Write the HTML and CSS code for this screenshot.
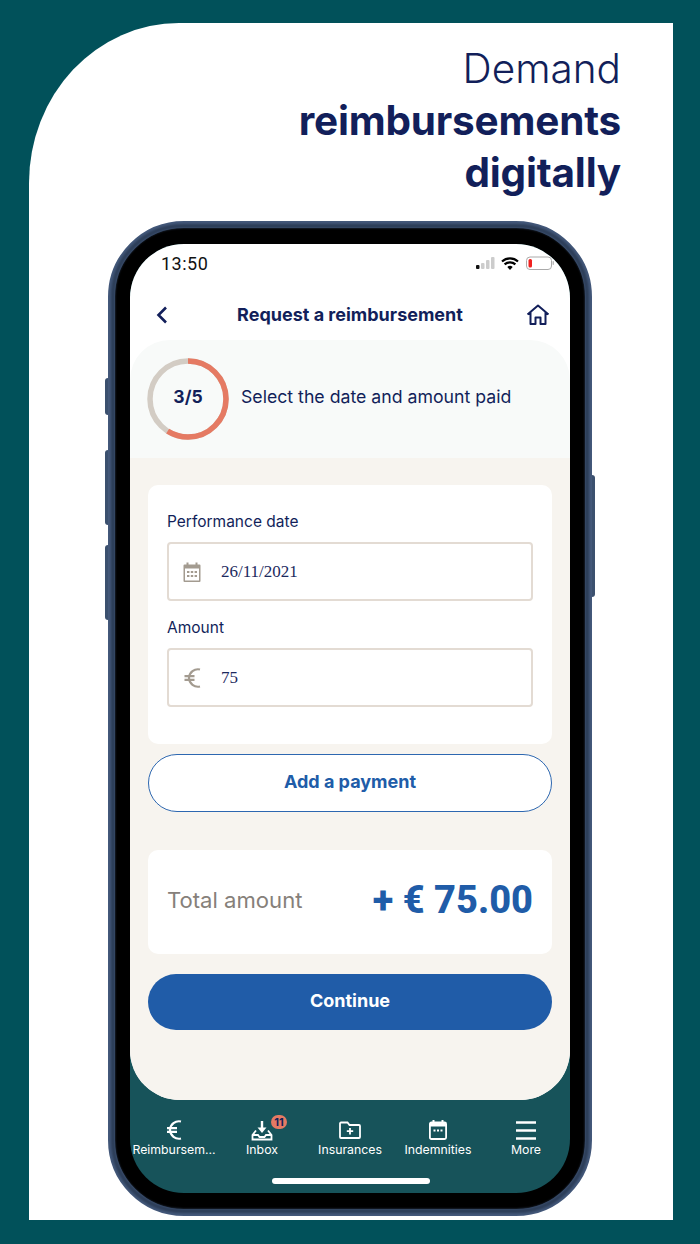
FILE: index.html
```html
<!DOCTYPE html>
<html lang="en">
<head>
    <meta charset="UTF-8">
    <title>Demand reimbursements digitally</title>
    <link rel="stylesheet" href="styles.css">
</head>
<body>
    <div class="panel">
        <h1 class="headline">Demand<br><b>reimbursements<br>digitally</b></h1>
        <div class="phone">
            <span class="side-btn side-1"></span>
            <span class="side-btn side-2"></span>
            <span class="side-btn side-3"></span>
            <span class="side-btn side-4"></span>
            <div class="screen">
                <div class="status-bar">
                    <span class="time">13:50</span>
                    <svg class="status-icons" width="78" height="16" viewBox="0 0 78 16">
                        <rect x="0" y="9" width="3.5" height="4" rx="1" fill="#111"/>
                        <rect x="5" y="7" width="3.5" height="6" rx="1" fill="#ccc"/>
                        <rect x="10" y="4" width="3.5" height="9" rx="1" fill="#ccc"/>
                        <rect x="15" y="1" width="3.5" height="12" rx="1" fill="#ccc"/>
                        <path d="M26 5.5a12 12 0 0 1 16 0M28.6 8.4a8 8 0 0 1 10.8 0" fill="none" stroke="#000" stroke-width="2.2"/>
                        <path d="M31.3 11a4 4 0 0 1 5.4 0L34 14z" fill="#000"/>
                        <rect x="50.5" y="1" width="25" height="12.5" rx="3.5" fill="#fff" stroke="#aaa"/>
                        <rect x="52.5" y="3" width="3.5" height="8.5" rx="1.5" fill="#f0211f"/>
                        <rect x="76.5" y="5" width="1.5" height="4" rx="0.7" fill="#bbb"/>
                    </svg>
                </div>
                <div class="nav-bar">
                    <svg class="nav-back" width="12" height="18" viewBox="0 0 12 18"><path d="M10 1.5 2.5 9l7.5 7.5" fill="none" stroke="#121f5a" stroke-width="2.6"/></svg>
                    <span class="nav-title">Request a reimbursement</span>
                    <svg class="nav-home" width="24" height="22" viewBox="0 0 24 22"><path d="M1.5 10.5 12 1.5l10.5 9M4.5 8.500V20h5v-6.500h5V20h5V8.500" fill="none" stroke="#121f5a" stroke-width="2" stroke-linejoin="round"/></svg>
                </div>
                <div class="content">
                    <div class="step">
                        <div class="ring">
                            <svg width="82" height="82" viewBox="0 0 82 82">
                                <circle cx="41" cy="41" r="38" fill="none" stroke="#d3ccc4" stroke-width="5.5"/>
                                <circle cx="41" cy="41" r="38" fill="none" stroke="#e57a63" stroke-width="5.5" pathLength="100" stroke-dasharray="59 100" transform="rotate(-90 41 41)"/>
                            </svg>
                            <span class="ring-label">3/5</span>
                        </div>
                        <span class="step-text">Select the date and amount paid</span>
                    </div>
                    <div class="form-area">
                        <div class="card fields">
                            <label class="field-label">Performance date</label>
                            <div class="field">
                                <svg class="field-icon" width="18" height="20" viewBox="0 0 18 20">
                                    <path d="M1.500 2.500h15a1 1 0 0 1 1 1V19a1 1 0 0 1-1 1h-15a1 1 0 0 1-1-1V3.500a1 1 0 0 1 1-1z" fill="#a39b90"/>
                                    <rect x="3.500" y="0.500" width="2" height="4" fill="#a39b90"/>
                                    <rect x="12.500" y="0.500" width="2" height="4" fill="#a39b90"/>
                                    <rect x="2" y="6.500" width="14" height="12" fill="#fff"/>
                                    <g fill="#a39b90">
                                        <rect x="4" y="9" width="2.400" height="2"/><rect x="7.800" y="9" width="2.400" height="2"/><rect x="11.600" y="9" width="2.400" height="2"/>
                                        <rect x="4" y="13" width="2.400" height="2"/><rect x="7.800" y="13" width="2.400" height="2"/><rect x="11.600" y="13" width="2.400" height="2"/>
                                    </g>
                                </svg>
                                <span class="field-value">26/11/2021</span>
                            </div>
                            <label class="field-label label-amount">Amount</label>
                            <div class="field">
                                <svg class="field-icon" width="18" height="20" viewBox="0 0 18 20">
                                    <path d="M17 1.500A9 9 0 0 0 6 10a9 9 0 0 0 11 8.500M1.500 8.200h10M1.500 11.800h10" fill="none" stroke="#a39b90" stroke-width="2.200"/>
                                </svg>
                                <span class="field-value">75</span>
                            </div>
                        </div>
                        <div class="add-payment">Add a payment</div>
                        <div class="card total">
                            <span class="total-label">Total amount</span>
                            <span class="total-value">+ € 75.00</span>
                        </div>
                        <div class="continue">Continue</div>
                    </div>
                </div>
                <div class="tabs">
                    <div class="tab">
                        <svg class="tab-icon" width="22" height="22" viewBox="0 0 22 22">
                            <path d="M18 2.500A9 9 0 0 0 7 11a9 9 0 0 0 11 8.500M4 9.200h10M4 12.800h10" fill="none" stroke="#fff" stroke-width="2.200"/>
                        </svg>
                        <span class="tab-label">Reimbursem...</span>
                    </div>
                    <div class="tab">
                        <svg class="tab-icon" width="22" height="22" viewBox="0 0 22 22">
                            <path d="M5 11.500 1.500 16v4.500h19V16L17 11.500" fill="none" stroke="#fff" stroke-width="1.800"/>
                            <path d="M1.500 16h5.500l1.500 2h5l1.500-2h5.500" fill="none" stroke="#fff" stroke-width="1.800"/>
                            <path d="M11 2v8" stroke="#fff" stroke-width="2.400"/>
                            <path d="M6.500 8.500h9L11 14z" fill="#fff"/>
                        </svg>
                        <span class="badge">11</span>
                        <span class="tab-label">Inbox</span>
                    </div>
                    <div class="tab">
                        <svg class="tab-icon" width="22" height="22" viewBox="0 0 22 22">
                            <path d="M2 3.500h6.500l2 2.500H20a1 1 0 0 1 1 1v11a1 1 0 0 1-1 1H2a1 1 0 0 1-1-1V4.500a1 1 0 0 1 1-1z" fill="none" stroke="#fff" stroke-width="1.800"/>
                            <path d="M11 9v6.500M7.800 12.200h6.400" stroke="#fff" stroke-width="1.800"/>
                        </svg>
                        <span class="tab-label">Insurances</span>
                    </div>
                    <div class="tab">
                        <svg class="tab-icon" width="22" height="22" viewBox="0 0 22 22">
                            <rect x="2.900" y="3.500" width="16.200" height="16.500" rx="1.500" fill="none" stroke="#fff" stroke-width="1.800"/>
                            <rect x="3" y="3.500" width="16" height="4" fill="#fff"/>
                            <rect x="5.500" y="1" width="2" height="4" fill="#fff"/>
                            <rect x="14.500" y="1" width="2" height="4" fill="#fff"/>
                            <rect x="6.500" y="10.500" width="2" height="2" fill="#fff"/>
                            <rect x="10" y="10.500" width="2" height="2" fill="#fff"/>
                            <rect x="13.500" y="10.500" width="2" height="2" fill="#fff"/>
                        </svg>
                        <span class="tab-label">Indemnities</span>
                    </div>
                    <div class="tab">
                        <svg class="tab-icon" width="22" height="22" viewBox="0 0 22 22">
                            <path d="M1 3.500h20M1 11.500h20M1 19.500h20" stroke="#fff" stroke-width="2.400"/>
                        </svg>
                        <span class="tab-label">More</span>
                    </div>
                </div>
                <div class="home-bar"></div>
            </div>
        </div>
    </div>
</body>
</html>
```

FILE: styles.css
```css
html, body {
    margin: 0;
    padding: 0;
}
body {
    width: 700px;
    height: 1244px;
    box-sizing: border-box;
    padding: 23px 27px 24px 29px;
    background-color: #01515a;
    font-family: "Inter", sans-serif;
    color: #121f5a;
    overflow: hidden;
}
.panel {
    height: 1197px;
    background-color: #fff;
    border-top-left-radius: 150px 160px;
    overflow: hidden;
}
.headline {
    margin: 0;
    padding: 20px 52px 0 0;
    height: 178px;
    box-sizing: border-box;
    text-align: right;
    font-size: 40.5px;
    line-height: 52px;
    font-weight: 300;
}
.headline b {
    font-weight: 700;
    letter-spacing: -0.2px;
}
.phone {
    position: relative;
    width: 484px;
    height: 995px;
    margin: 20px 0 0 79px;
    box-sizing: border-box;
    background-color: #000;
    border: 7px solid #43587a;
    padding: 16px 15px;
    border-radius: 76px;
}
/* darker inner edge of the metal frame */
.phone::before {
    content: "";
    position: absolute;
    inset: -4px;
    border: 4px solid #2c3d57;
    border-radius: 72px;
    filter: blur(1px);
}
.side-btn {
    position: absolute;
    width: 3px;
    background-color: #3b506e;
    border-radius: 3px 0 0 3px;
}
.side-1 { left: -10px; top: 150px; height: 37px; }
.side-2 { left: -10px; top: 222px; height: 75px; }
.side-3 { left: -10px; top: 317px; height: 75px; }
.side-4 { right: -10px; top: 247px; height: 122px; border-radius: 0 3px 3px 0; }
.screen {
    position: relative;
    width: 440px;
    height: 949px;
    background-color: #17535a;
    border-radius: 54px;
    overflow: hidden;
}
.status-bar {
    display: flex;
    justify-content: space-between;
    align-items: center;
    height: 40px;
    background-color: #fff;
    padding: 0 16px 0 31px;
    box-sizing: border-box;
}
.time {
    font-size: 18px;
    letter-spacing: 0.5px;
    color: #111;
    font-family: "Roboto", sans-serif;
    padding-bottom: 2px;
}
.nav-bar {
    display: flex;
    align-items: center;
    justify-content: space-between;
    height: 56px;
    background-color: #fff;
    padding: 6px 20px 0 26px;
    box-sizing: border-box;
}
.nav-title {
    font-size: 18px;
    font-weight: 700;
    padding-bottom: 2px;
    margin-left: 6px;
}
.content {
    height: 760px;
    background-color: #fff;
    border-radius: 0 0 50px 50px;
    overflow: hidden;
}
.step {
    display: flex;
    align-items: center;
    gap: 12px;
    height: 118px;
    padding-left: 17px;
    background: #f8faf9;
    border-radius: 40px 40px 0 0;
}
.ring {
    position: relative;
    width: 82px;
    height: 82px;
}
.ring-label {
    position: absolute;
    inset: 0 0 5px;
    display: flex;
    align-items: center;
    justify-content: center;
    font-size: 17.5px;
    font-weight: 700;
}
.step-text {
    font-size: 17.7px;
    padding-bottom: 5px;
}
.form-area {
    height: 642px;
    box-sizing: border-box;
    padding: 27px 18px 0;
    background-color: #f7f4ef;
}
.card {
    background-color: #fff;
    border-radius: 10px;
}
.fields {
    height: 259px;
    box-sizing: border-box;
    padding: 27px 19px 0;
}
.field-label {
    display: block;
    font-size: 15.5px;
    line-height: 20px;
}
.label-amount {
    margin-top: 17px;
}
.field {
    display: flex;
    align-items: center;
    height: 59px;
    margin-top: 10px;
    box-sizing: border-box;
    border: 2px solid #e3dbd3;
    border-radius: 4px;
    padding-left: 14px;
}
.field-icon {
    width: 18px;
    flex: none;
    margin-right: 20px;
}
.field-value {
    font-family: "Liberation Serif", serif;
    font-size: 17px;
    color: #1c2a5e;
}
.add-payment {
    height: 58px;
    margin-top: 10px;
    padding-bottom: 3px;
    display: flex;
    align-items: center;
    justify-content: center;
    background-color: #fff;
    border: 1px solid #2d67b0;
    border-radius: 29px;
    box-sizing: border-box;
    color: #205ca8;
    font-size: 18px;
    font-weight: 700;
}
.total {
    display: flex;
    align-items: center;
    justify-content: space-between;
    height: 104px;
    margin-top: 38px;
    padding: 0 19px;
    box-sizing: border-box;
}
.total-label {
    font-size: 22.1px;
    color: #86807a;
    padding-bottom: 4px;
}
.total-value {
    font-family: "Roboto", sans-serif;
    font-size: 38px;
    font-weight: 800;
    color: #205ca8;
    padding-bottom: 5px;
}
.continue {
    height: 56px;
    margin-top: 20px;
    padding-bottom: 3px;
    box-sizing: border-box;
    display: flex;
    align-items: center;
    justify-content: center;
    background-color: #205ca8;
    border-radius: 28px;
    color: #fff;
    font-size: 18px;
    font-weight: 700;
}
.tabs {
    display: flex;
    padding-top: 19px;
}
.tab {
    position: relative;
    width: 88px;
    display: flex;
    flex-direction: column;
    align-items: center;
    color: #fff;
}
.tab-icon {
    height: 22px;
    display: block;
}
.tab-label {
    margin-top: 1px;
    font-size: 12.3px;
    line-height: 16px;
    white-space: nowrap;
}
.badge {
    position: absolute;
    left: 53px;
    top: -4px;
    width: 16px;
    height: 14px;
    border-radius: 7px;
    background-color: #e57a63;
    color: #121f5a;
    font-size: 11px;
    font-weight: 700;
    line-height: 14px;
    text-align: center;
}
.home-bar {
    position: absolute;
    left: 142px;
    bottom: 9px;
    width: 158px;
    height: 6px;
    border-radius: 3px;
    background-color: #fff;
}
```
